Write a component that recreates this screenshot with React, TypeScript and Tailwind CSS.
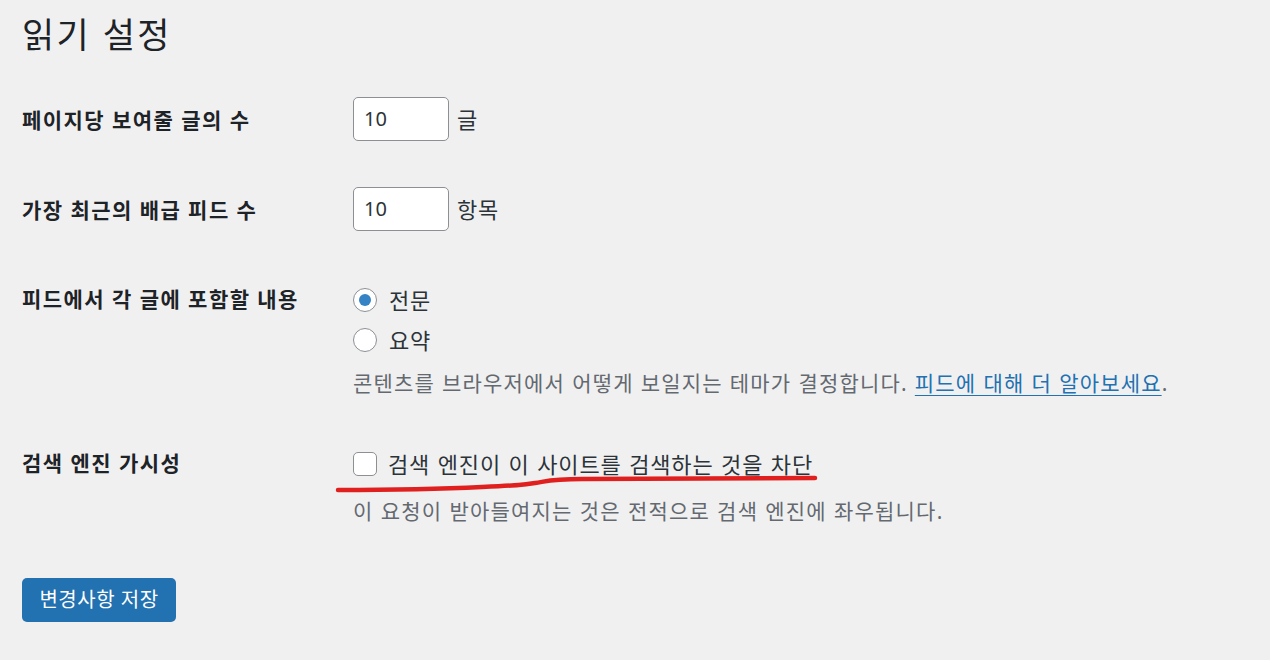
import React from "react";

const font = { fontFamily: '"Noto Sans", "Noto Sans CJK KR", sans-serif' };

export default function App() {
  return (
    <div className="min-h-[660px] w-[1270px] bg-[#f0f0f1] pl-[22px] text-[#1d2327]" style={font}>
      <h1 className="pt-[12px] text-[35px] leading-[46px] font-normal tracking-[2.4px] text-[#1d2327]">읽기 설정</h1>

      {/* Row 1 */}
      <div className="mt-[39px] flex">
        <div className="w-[331px] pt-[9px] text-[21px] leading-[28px] font-bold tracking-[1.45px]">페이지당 보여줄 글의 수</div>
        <div className="flex items-center gap-[8px]">
          <div className="flex h-[44px] w-[96px] items-center rounded-[5px] border border-[#8c8f94] bg-white pl-[10px] text-[20px] text-[#2c3338]">10</div>
          <span className="text-[22px] text-[#2c3338] tracking-[0.8px]">글</span>
        </div>
      </div>

      {/* Row 2 */}
      <div className="mt-[46px] flex">
        <div className="w-[331px] pt-[9px] text-[21px] leading-[28px] font-bold tracking-[1.45px]">가장 최근의 배급 피드 수</div>
        <div className="flex items-center gap-[8px]">
          <div className="flex h-[44px] w-[96px] items-center rounded-[5px] border border-[#8c8f94] bg-white pl-[10px] text-[20px] text-[#2c3338]">10</div>
          <span className="text-[22px] text-[#2c3338] tracking-[0.8px]">항목</span>
        </div>
      </div>

      {/* Row 3 */}
      <div className="mt-[49px] flex">
        <div className="w-[331px] pt-[5px] text-[21px] leading-[28px] font-bold tracking-[1.45px]">피드에서 각 글에 포함할 내용</div>
        <div className="flex flex-col">
          <div className="flex h-[40px] items-center gap-[12px] text-[22px] text-[#2c3338] tracking-[0.8px]">
            <span className="flex h-[24px] w-[24px] items-center justify-center rounded-full border border-[#8c8f94] bg-white">
              <span className="h-[12px] w-[12px] rounded-full bg-[#3582c4]" />
            </span>
            <span>전문</span>
          </div>
          <div className="flex h-[40px] items-center gap-[12px] text-[22px] text-[#2c3338] tracking-[0.8px]">
            <span className="h-[24px] w-[24px] rounded-full border border-[#8c8f94] bg-white" />
            <span>요약</span>
          </div>
          <div className="mt-[4px] flex h-[40px] items-center text-[21px] text-[#646970] tracking-[1.17px] [word-spacing:0.5px]">
            <span>
              콘텐츠를 브라우저에서 어떻게 보일지는 테마가 결정합니다.{" "}
              <span className="text-[#2271b1] underline decoration-[1px] underline-offset-[4px]">피드에 대해 더 알아보세요</span>.
            </span>
          </div>
        </div>
      </div>

      {/* Row 4 */}
      <div className="relative mt-[40px] flex">
        <div className="flex h-[40px] w-[331px] items-center text-[21px] font-bold tracking-[1.45px]">검색 엔진 가시성</div>
        <div className="flex flex-col">
          <div className="flex h-[40px] items-center gap-[11px] text-[22px] text-[#2c3338]">
            <span className="h-[24px] w-[24px] rounded-[5px] border border-[#8c8f94] bg-white" />
            <span className="tracking-[0.85px] [word-spacing:1px]">검색 엔진이 이 사이트를 검색하는 것을 차단</span>
          </div>
          <div className="mt-[8px] flex h-[40px] items-center text-[21px] text-[#646970] tracking-[1.2px] [word-spacing:0.5px]">
            이 요청이 받아들여지는 것은 전적으로 검색 엔진에 좌우됩니다.
          </div>
        </div>
        <svg
          className="pointer-events-none absolute left-[310px] top-[26px]"
          width="520"
          height="30"
          viewBox="0 0 520 30"
        >
          <path
            d="M6 20 C 60 20, 110 19, 150 17 S 190 15, 203 13 S 220 9, 250 9 C 330 9, 410 9, 483 8"
            fill="none"
            stroke="#e0201e"
            strokeWidth="4.5"
            strokeLinecap="round"
          />
        </svg>
      </div>

      <button className="mt-[46px] flex h-[44px] w-[154px] items-center justify-center rounded-[5px] bg-[#2271b1] text-[20px] text-white tracking-[0.5px]">
        변경사항 저장
      </button>
    </div>
  );
}
